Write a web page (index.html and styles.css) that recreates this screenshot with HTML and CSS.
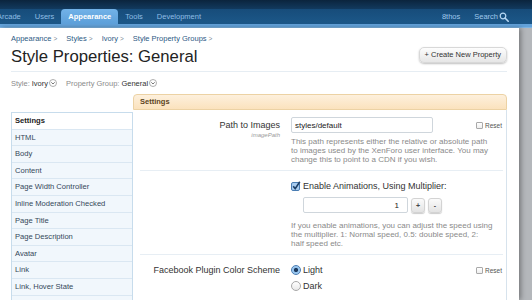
FILE: index.html
```html
<!DOCTYPE html>
<html lang="en">
<head>
    <meta charset="UTF-8">
    <meta name="viewport" content="width=device-width, initial-scale=1.0">
    <title>Style Properties: General</title>
    <link rel="stylesheet" href="styles.css">
</head>
<body>
    <div id="header">
        <div class="masthead"></div>
        <div class="tabs">
            <ul class="tab-list">
                <li><a href="#">Arcade</a></li>
                <li><a href="#">Users</a></li>
                <li class="selected"><a href="#">Appearance</a></li>
                <li><a href="#">Tools</a></li>
                <li><a href="#">Development</a></li>
            </ul>
            <div class="visitor-tabs">
                <a href="#">8thos</a>
                <a href="#" class="search-link">Search
                    <svg class="search-icon" width="10" height="10" viewBox="0 0 10 10">
                        <circle cx="4" cy="4" r="2.8" fill="none" stroke="#b8d8f4" stroke-width="1.2"/>
                        <line x1="6" y1="6" x2="9.2" y2="9.2" stroke="#b8d8f4" stroke-width="1.6" stroke-linecap="round"/>
                    </svg>
                </a>
            </div>
        </div>
        <div class="tab-strip"></div>
    </div>

    <div id="page">
        <div class="breadcrumb">
            <a href="#">Appearance</a><span class="arrow">&gt;</span>
            <a href="#">Styles</a><span class="arrow">&gt;</span>
            <a href="#">Ivory</a><span class="arrow">&gt;</span>
            <a href="#">Style Property Groups</a><span class="arrow">&gt;</span>
        </div>

        <div class="title-bar">
            <h1>Style Properties: General</h1>
            <a href="#" class="button">+ Create New Property</a>
        </div>

        <div class="filters">
            <span class="filter-label">Style:</span>
            <span class="filter-value">Ivory</span>
            <svg class="chooser" width="8" height="8" viewBox="0 0 8 8">
                <circle cx="4" cy="4" r="3.5" fill="#fff" stroke="#9a9a9a" stroke-width="0.8"/>
                <path d="M2.3 3.3 L4 5 L5.7 3.3" fill="none" stroke="#666" stroke-width="0.9"/>
            </svg>
            <span class="filter-label group-label">Property Group:</span>
            <span class="filter-value">General</span>
            <svg class="chooser" width="8" height="8" viewBox="0 0 8 8">
                <circle cx="4" cy="4" r="3.5" fill="#fff" stroke="#9a9a9a" stroke-width="0.8"/>
                <path d="M2.3 3.3 L4 5 L5.7 3.3" fill="none" stroke="#666" stroke-width="0.9"/>
            </svg>
        </div>

        <div class="properties">
            <div class="group-header">Settings</div>

            <ul class="property-list">
                <li class="selected">Settings</li>
                <li>HTML</li>
                <li>Body</li>
                <li>Content</li>
                <li>Page Width Controller</li>
                <li>Inline Moderation Checked</li>
                <li>Page Title</li>
                <li>Page Description</li>
                <li>Avatar</li>
                <li>Link</li>
                <li>Link, Hover State</li>
                <li>Title Prefix</li>
            </ul>

            <form class="property-form">
                <div class="property-row">
                    <div class="row-label">
                        <label>Path to Images</label>
                        <span class="property-name">imagePath</span>
                    </div>
                    <div class="row-control">
                        <input type="text" class="text-input" value="styles/default">
                    </div>
                    <label class="reset"><span class="reset-box"></span>Reset</label>
                    <p class="explain">This path represents either the relative or absolute path to images used by the XenForo user interface. You may change this to point to a CDN if you wish.</p>
                </div>

                <div class="property-row">
                    <div class="row-label"></div>
                    <div class="row-control">
                        <label class="check-line">
                            <svg class="checkbox" width="10" height="10" viewBox="0 0 10 10">
                                <rect x="0.5" y="1.5" width="8" height="8" rx="1.5" fill="#a9cdf0" stroke="#4a7db3"/>
                                <path d="M2.2 5.2 L4.2 7.6 L8.8 0.8" fill="none" stroke="#1e3f66" stroke-width="1.6"/>
                            </svg>
                            Enable Animations, Using Multiplier:
                        </label>
                        <div class="spinner">
                            <input type="text" class="number-input" value="1">
                            <button type="button" class="spin-button">+</button>
                            <button type="button" class="spin-button">-</button>
                        </div>
                    </div>
                    <div class="reset-space"></div>
                    <p class="explain">If you enable animations, you can adjust the speed using the multiplier. 1: Normal speed, 0.5: double speed, 2: half speed etc.</p>
                </div>

                <div class="property-row">
                    <div class="row-label">
                        <label>Facebook Plugin Color Scheme</label>
                    </div>
                    <div class="row-control">
                        <label class="radio-line"><span class="radio checked"></span>Light</label>
                        <label class="radio-line"><span class="radio"></span>Dark</label>
                    </div>
                    <label class="reset"><span class="reset-box"></span>Reset</label>
                    <p class="explain">Choose the color scheme for all Facebook plugins in this style.</p>
                </div>
            </form>
        </div>
    </div>
</body>
</html>
```

FILE: styles.css
```css
* {
    box-sizing: border-box;
}

body {
    margin: 0;
    height: 300px;
    overflow: hidden;
    font-family: 'Liberation Sans', Arial, sans-serif;
    background-color: #b4b7bb;
    color: #333;
}

a {
    text-decoration: none;
}

/* header */

.masthead {
    height: 9px;
    background: linear-gradient(#0b243d, #123a5e);
}

.tabs {
    height: 15px;
    display: flex;
    justify-content: space-between;
    align-items: stretch;
    background: linear-gradient(#174c7a, #1c5889);
}

.tab-list {
    display: flex;
    margin: 0 0 0 -10px;
    padding: 0;
    list-style: none;
}

.tab-list li a {
    display: block;
    padding: 0 7px;
    line-height: 15px;
    font-size: 7.5px;
    color: #8fbde4;
}

.tab-list li.selected a {
    background: linear-gradient(#72b2e8, #5c9fd9);
    border-radius: 4px 4px 0 0;
    color: #fff;
    font-weight: bold;
}

.visitor-tabs {
    display: flex;
    align-items: center;
    gap: 14px;
    padding-right: 23px;
    font-size: 7.5px;
}

.visitor-tabs a {
    color: #9fc8ec;
}

.search-link {
    display: flex;
    align-items: center;
    gap: 1px;
}

.tab-strip {
    height: 4px;
    background-color: #63a3db;
    border-bottom: 1px solid #7db4e3;
}

/* page */

#page {
    width: 519px;
    height: 272px;
    padding: 0 12px 0 11px;
    background-color: #fff;
    box-shadow: 2px 0 5px rgba(0, 0, 0, 0.35);
}

.breadcrumb {
    padding-top: 5px;
    line-height: 12px;
    font-size: 7.5px;
}

.breadcrumb a {
    color: #2d5a85;
}

.breadcrumb .arrow {
    margin: 0 7px 0 2px;
    color: #7d8b98;
    font-size: 6.5px;
}

.title-bar {
    display: flex;
    justify-content: space-between;
    align-items: flex-start;
    margin-top: 2px;
    padding-bottom: 4px;
    border-bottom: 1px solid #e6edf3;
}

h1 {
    margin: 0;
    font-size: 16.7px;
    line-height: 20px;
    font-weight: normal;
    color: #232323;
}

.button {
    display: block;
    height: 16px;
    padding: 0 5px;
    line-height: 14px;
    font-size: 7.5px;
    color: #333;
    background: linear-gradient(#fdfdfd, #e6e6e6);
    border: 1px solid #d8d8d8;
    border-radius: 5px;
    box-shadow: 0 1px 2px rgba(0, 0, 0, 0.25);
}

.filters {
    display: flex;
    align-items: center;
    margin-top: 6px;
    height: 10px;
    font-size: 7.5px;
}

.filter-label {
    color: #8b8b8b;
    margin-right: 2px;
}

.group-label {
    margin-left: 9px;
}

.filter-value {
    color: #333;
}

.chooser {
    margin-left: 1px;
}

/* properties */

.properties {
    display: grid;
    grid-template-columns: 122px 374px;
    grid-template-areas:
        ". header"
        "list form";
    margin-top: 6px;
}

.group-header {
    grid-area: header;
    height: 16px;
    padding: 0 6px;
    line-height: 14px;
    font-size: 7.5px;
    font-weight: bold;
    color: #5b4320;
    background: linear-gradient(#fdf0dd, #fbe2bd);
    border: 1px solid #ecd2a4;
    border-radius: 4px 4px 0 0;
}

.property-list {
    grid-area: list;
    margin: 2px 0 0;
    padding: 0;
    list-style: none;
    border: 1px solid #c7dcec;
    border-bottom: none;
    background-color: #f1f7fc;
}

.property-list li {
    height: 16.6px;
    padding: 0 3px;
    line-height: 15.6px;
    font-size: 7.6px;
    color: #34475a;
    border-bottom: 1px solid #dae7f2;
}

.property-list li.selected {
    background-color: #fff;
    color: #222;
    font-weight: bold;
}

.property-form {
    grid-area: form;
    margin: 0;
    border-right: 1px solid #d7e3ed;
}

.property-row {
    display: grid;
    grid-template-columns: 140px 1fr 27px;
    column-gap: 11px;
    margin: 0 3px 0 7px;
    padding: 7px 0 6px;
    border-bottom: 1px solid #e7eef4;
}

.row-label {
    grid-column: 1;
    grid-row: 1 / 3;
    text-align: right;
}

.row-label label {
    display: block;
    line-height: 16px;
    font-size: 9px;
    color: #333;
}

.property-name {
    display: block;
    margin-top: -2px;
    line-height: 8px;
    font-size: 6px;
    font-style: italic;
    color: #9a9a9a;
}

.row-control {
    grid-column: 2;
    grid-row: 1;
}

.text-input {
    display: block;
    width: 142px;
    height: 16px;
    margin: 0;
    padding: 0 3px;
    font-family: inherit;
    font-size: 8px;
    color: #222;
    border: 1px solid #cfd6dc;
    border-radius: 2px;
}

.reset {
    grid-column: 3;
    grid-row: 1;
    display: flex;
    align-items: center;
    align-self: start;
    gap: 2px;
    height: 16px;
    font-size: 6.5px;
    color: #555;
}

.reset-box {
    width: 7px;
    height: 7px;
    border: 1px solid #a9a9a9;
    border-radius: 1px;
    background: linear-gradient(#fff, #eee);
}

.explain {
    grid-column: 2 / 4;
    grid-row: 2;
    margin: 4px 0 0;
    padding-right: 9.9px;
    line-height: 9px;
    font-size: 8px;
    color: #8a8a8a;
}

.check-line {
    display: flex;
    align-items: center;
    gap: 2px;
    line-height: 16px;
    font-size: 9px;
    color: #333;
}

.spinner {
    display: flex;
    align-items: center;
    gap: 2px;
    margin: 3px 0 0 12px;
}

.number-input {
    width: 105px;
    height: 16px;
    margin: 0;
    padding: 0 8px;
    text-align: right;
    font-family: inherit;
    font-size: 8px;
    color: #222;
    border: 1px solid #cfd6dc;
    border-radius: 2px;
}

.spin-button {
    width: 14px;
    height: 15px;
    margin-left: 1px;
    padding: 0;
    font-family: inherit;
    font-size: 7px;
    font-weight: bold;
    color: #444;
    background: linear-gradient(#fbfbfb, #e3e3e3);
    border: 1px solid #d3d3d3;
    border-radius: 3px;
    box-shadow: 0 1px 1px rgba(0, 0, 0, 0.2);
}

.property-row:nth-child(2) .explain {
    margin-top: 8px;
}

.radio-line {
    display: flex;
    align-items: center;
    gap: 2px;
    line-height: 16px;
    font-size: 9px;
    color: #333;
}

.radio {
    width: 10px;
    height: 10px;
    border-radius: 50%;
    border: 1px solid #a8a8a8;
    background: linear-gradient(#fff, #e9e9e9);
}

.radio.checked {
    border-color: #4a7db3;
    background: radial-gradient(circle, #1d3a5e 0 1.8px, #8fc0ec 2.4px, #b8d9f6 100%);
}
```
